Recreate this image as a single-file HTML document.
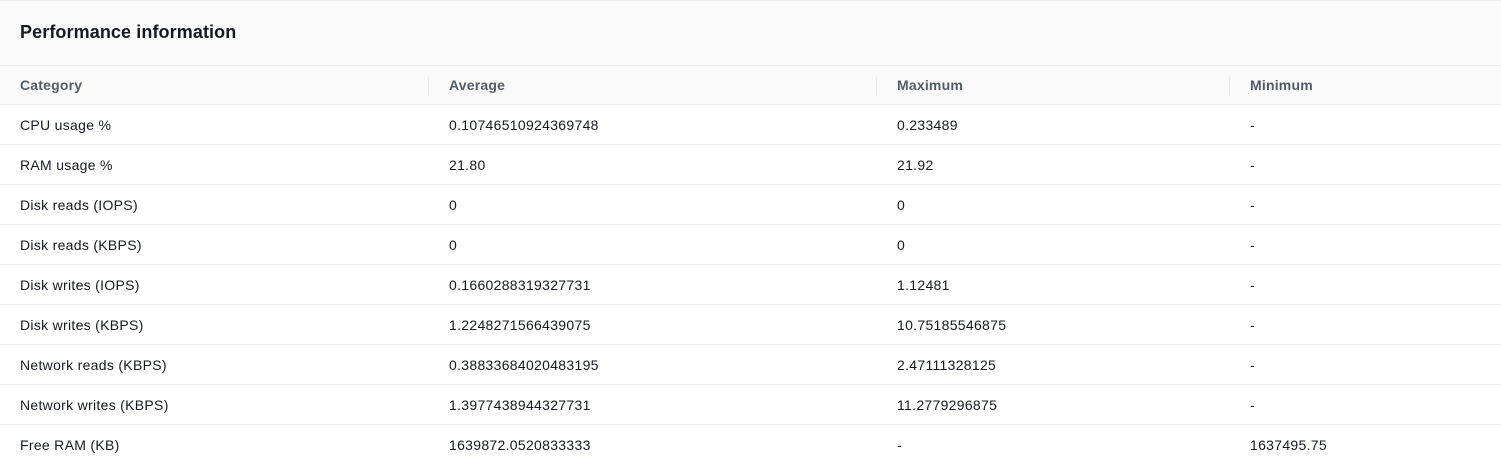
<!DOCTYPE html>
<html><head><style>
body{margin:0;width:1501px;height:460px;overflow:hidden;background:#fff;font-family:"Liberation Sans",Arial,sans-serif;color:#16191f}
.top{position:absolute;left:0;top:0;width:1501px;height:66px;background:#fafafa;border-top:1px solid #eaeded;border-bottom:1px solid #eaeded;box-sizing:border-box}
.title{position:absolute;left:20px;top:21px;font-size:18px;font-weight:bold;letter-spacing:0.1px}
.row{position:absolute;left:0;width:1501px;height:40px;border-bottom:1px solid #eaeded;box-sizing:border-box;font-size:14px;letter-spacing:0.3px}
.row span{position:absolute;top:12px}
.hd{background:#fafafa;color:#545b64;font-weight:bold;height:39px;letter-spacing:0.2px}
.div{position:absolute;top:10px;width:1px;height:20px;background:#eaeded}
</style></head><body>
<div class="top"><div class="title">Performance information</div></div>
<div class="row hd" style="top:66px"><span style="left:20px;top:11px">Category</span><div class="div" style="left:428px"></div><span style="left:449px;top:11px">Average</span><div class="div" style="left:876px"></div><span style="left:897px;top:11px">Maximum</span><div class="div" style="left:1229px"></div><span style="left:1250px;top:11px">Minimum</span></div>
<div class="row" style="top:105px"><span style="left:20px">CPU usage %</span><span style="left:449px">0.10746510924369748</span><span style="left:897px">0.233489</span><span style="left:1250px">-</span></div>
<div class="row" style="top:145px"><span style="left:20px">RAM usage %</span><span style="left:449px">21.80</span><span style="left:897px">21.92</span><span style="left:1250px">-</span></div>
<div class="row" style="top:185px"><span style="left:20px">Disk reads (IOPS)</span><span style="left:449px">0</span><span style="left:897px">0</span><span style="left:1250px">-</span></div>
<div class="row" style="top:225px"><span style="left:20px">Disk reads (KBPS)</span><span style="left:449px">0</span><span style="left:897px">0</span><span style="left:1250px">-</span></div>
<div class="row" style="top:265px"><span style="left:20px">Disk writes (IOPS)</span><span style="left:449px">0.1660288319327731</span><span style="left:897px">1.12481</span><span style="left:1250px">-</span></div>
<div class="row" style="top:305px"><span style="left:20px">Disk writes (KBPS)</span><span style="left:449px">1.2248271566439075</span><span style="left:897px">10.75185546875</span><span style="left:1250px">-</span></div>
<div class="row" style="top:345px"><span style="left:20px">Network reads (KBPS)</span><span style="left:449px">0.38833684020483195</span><span style="left:897px">2.47111328125</span><span style="left:1250px">-</span></div>
<div class="row" style="top:385px"><span style="left:20px">Network writes (KBPS)</span><span style="left:449px">1.3977438944327731</span><span style="left:897px">11.2779296875</span><span style="left:1250px">-</span></div>
<div class="row" style="top:425px;border:none"><span style="left:20px">Free RAM (KB)</span><span style="left:449px">1639872.0520833333</span><span style="left:897px">-</span><span style="left:1250px">1637495.75</span></div>
</body></html>
